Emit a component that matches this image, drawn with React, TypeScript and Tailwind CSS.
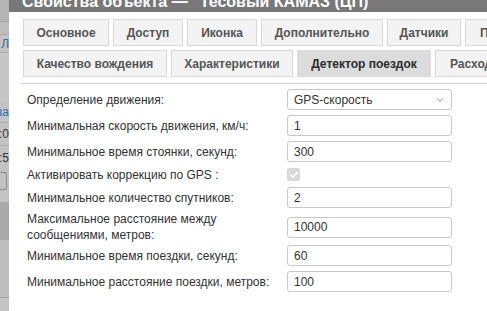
import { Check, ChevronDown } from "lucide-react";

const tabsTop = [
  { label: "Основное", w: "w-[86px]" },
  { label: "Доступ", w: "w-[70px]" },
  { label: "Иконка", w: "w-[70px]" },
  { label: "Дополнительно", w: "w-[122px]" },
  { label: "Датчики", w: "w-[74px]" },
  { label: "Произв.", w: "w-[60px]" },
];

const tabsBottom = [
  { label: "Качество вождения", w: "w-[144px]", active: false },
  { label: "Характеристики", w: "w-[122px]", active: false },
  { label: "Детектор поездок", w: "w-[134px]", active: true },
  { label: "Расход топлива", w: "w-[120px]", active: false },
];

function Tab({ label, w, active }: { label: string; w: string; active?: boolean }) {
  return (
    <div
      className={`${w} h-[27px] shrink-0 flex items-center justify-center whitespace-nowrap overflow-hidden text-[12px] font-bold ${
        active ? "bg-[#dcdcdc] border border-[#dcdcdc] text-[#2b2b2b]" : "bg-[#f3f3f3] border border-[#d9d9d9] text-[#555]"
      }`}
    >
      <span className={label === "Произв." || label === "Расход топлива" ? "self-center pl-[14px] w-full" : ""}>{label}</span>
    </div>
  );
}

function Field({ value }: { value: string }) {
  return (
    <div className="w-[165px] h-[21px] shrink-0 border border-[#c8c8c8] rounded-[3px] bg-white flex items-center px-[6px] text-[12px] text-[#333]">
      {value}
    </div>
  );
}

// dimmed page behind the dialog
function LeftStrip() {
  return (
    <div className="w-[9px] shrink-0 h-full flex flex-col overflow-hidden bg-[#c3c3c3] text-[12px] leading-[14px]">
      <div className="h-[22px] bg-[#b4b4b4] border-b border-[#a4a4a4]" />
      <div className="h-[13px] bg-[#bdbdbd] border-b border-[#a8a8a8]" />
      <div className="h-[18px] flex items-center justify-end whitespace-nowrap text-[#2f6fa8] border-b border-[#ababab]">Л</div>
      <div className="h-[48px] bg-[#c6c6c6]" />
      <div className="h-[22px] flex items-center justify-end whitespace-nowrap text-[#2f6fa8] border-b border-[#adadad]">ва</div>
      <div className="h-[23px] flex items-center justify-end whitespace-nowrap text-[#333] border-b border-[#adadad]">0:0</div>
      <div className="h-[23px] flex items-center justify-end whitespace-nowrap text-[#333]">8:5</div>
      <div className="h-[18px] mt-[3px] border border-[#8d8d8d] rounded-[2px] -ml-[4px] mr-[2px]" />
      <div className="h-[12px]" />
      <div className="h-[38px] bg-[#a9a9a9]" />
      <div className="h-[58px] bg-[#bdbdbd] border-b border-[#a6a6a6]" />
    </div>
  );
}

export default function App() {
  return (
    <div className="w-[487px] h-[311px] flex overflow-hidden bg-white font-['Liberation_Sans',Arial,sans-serif]">
      <LeftStrip />

      <div className="flex-1 min-w-0 flex flex-col overflow-hidden">
        {/* Title bar, cut at the top */}
        <div className="h-[12px] shrink-0 bg-[#787878] overflow-hidden pl-[13px]">
          <div className="-mt-[8px] text-[16px] leading-[20px] font-bold text-white whitespace-nowrap">
            Свойства объекта — "Тесовый КАМАЗ (ЦП)"
          </div>
        </div>

        {/* Tabs */}
        <div className="pl-[14px] pt-[7px] flex flex-col gap-[4px]">
          <div className="flex gap-[4px]">
            {tabsTop.map((t) => (
              <Tab key={t.label} label={t.label} w={t.w} />
            ))}
          </div>
          <div className="flex gap-[4px]">
            {tabsBottom.map((t) => (
              <Tab key={t.label} label={t.label} w={t.w} active={t.active} />
            ))}
          </div>
        </div>

        <div className="ml-[11px] mt-[6px] border-t border-[#d6d6d6]" />

        {/* Form */}
        <div className="pl-[18px] pt-[5px] flex flex-col text-[12px] text-[#333]">
          <div className="flex items-center h-[21px]">
            <div className="w-[260px] shrink-0">Определение движения:</div>
            <div className="w-[165px] h-[21px] shrink-0 border border-[#c8c8c8] rounded-[3px] bg-white flex items-center justify-between pl-[6px] pr-[6px]">
              <span>GPS-скорость</span>
              <ChevronDown className="w-[10px] h-[10px] text-[#666]" strokeWidth={2} />
            </div>
          </div>

          <div className="flex items-center h-[21px] mt-[5px]">
            <div className="w-[260px] shrink-0">Минимальная скорость движения, км/ч:</div>
            <Field value="1" />
          </div>

          <div className="flex items-center h-[21px] mt-[5px]">
            <div className="w-[260px] shrink-0">Минимальное время стоянки, секунд:</div>
            <Field value="300" />
          </div>

          <div className="flex items-center h-[15px] mt-[5px]">
            <div className="w-[260px] shrink-0">Активировать коррекцию по GPS :</div>
            <div className="w-[13px] h-[13px] rounded-[2px] bg-[#d9d9d9] flex items-center justify-center">
              <Check className="w-[10px] h-[10px] text-white" strokeWidth={3.5} />
            </div>
          </div>

          <div className="flex items-center h-[21px] mt-[5px]">
            <div className="w-[260px] shrink-0">Минимальное количество спутников:</div>
            <Field value="2" />
          </div>

          <div className="flex items-center h-[30px] mt-[4px]">
            <div className="w-[260px] shrink-0 leading-[16px] pr-[60px]">
              Максимальное расстояние между сообщениями, метров:
            </div>
            <Field value="10000" />
          </div>

          <div className="flex items-center h-[21px] mt-[3px]">
            <div className="w-[260px] shrink-0">Минимальное время поездки, секунд:</div>
            <Field value="60" />
          </div>

          <div className="flex items-center h-[21px] mt-[5px]">
            <div className="w-[260px] shrink-0">Минимальное расстояние поездки, метров:</div>
            <Field value="100" />
          </div>
        </div>
      </div>
    </div>
  );
}
